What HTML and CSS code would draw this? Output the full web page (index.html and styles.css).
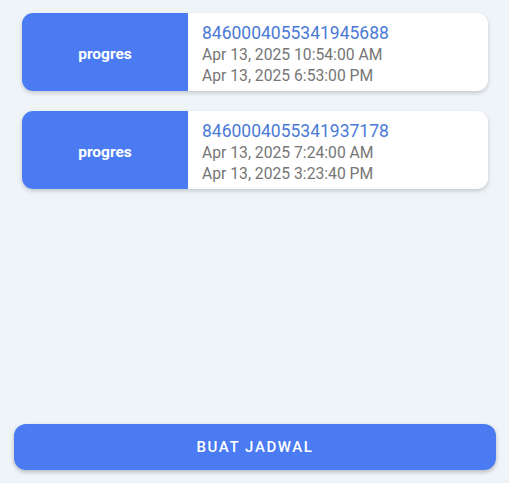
FILE: index.html
```html
<!DOCTYPE html>
<html>
<head>
<meta charset="utf-8">
<link rel="stylesheet" href="styles.css">
</head>
<body>
<div class="page">
  <div class="list">
    <div class="card">
      <div class="status">progres</div>
      <div class="info">
        <div class="id">8460004055341945688</div>
        <div class="date">Apr 13, 2025 10:54:00 AM</div>
        <div class="date">Apr 13, 2025 6:53:00 PM</div>
      </div>
    </div>
    <div class="card">
      <div class="status">progres</div>
      <div class="info">
        <div class="id">8460004055341937178</div>
        <div class="date">Apr 13, 2025 7:24:00 AM</div>
        <div class="date">Apr 13, 2025 3:23:40 PM</div>
      </div>
    </div>
  </div>
  <div class="footer">
    <button class="btn">BUAT JADWAL</button>
  </div>
</div>
</body>
</html>
```
FILE: styles.css
```css
html, body {
  margin: 0;
  padding: 0;
  background: #eff4f9;
  font-family: Roboto, "Noto Sans", sans-serif;
}
.page {
  height: 483px;
  display: flex;
  flex-direction: column;
  justify-content: space-between;
}
.list {
  display: flex;
  flex-direction: column;
  gap: 20px;
  padding: 13px 21px 0 22px;
}
.card {
  display: flex;
  height: 78px;
  background: #fff;
  border-radius: 11px;
  overflow: hidden;
  box-shadow: 0 2px 4px rgba(0, 0, 0, 0.18);
}
.status {
  width: 166px;
  flex: none;
  background: #4a7bf2;
  color: #fff;
  font-weight: 700;
  font-size: 15.5px;
  display: flex;
  align-items: center;
  justify-content: center;
  padding-top: 3px;
  box-sizing: border-box;
}
.info {
  padding: 9px 14px 0 14px;
  display: flex;
  flex-direction: column;
}
.id {
  color: #4b7ad6;
  font-size: 17.5px;
  line-height: 22px;
}
.date {
  color: #767676;
  font-size: 15.7px;
  line-height: 21px;
}
.footer {
  padding: 0 13px 13px 14px;
}
.btn {
  width: 100%;
  height: 46px;
  border: none;
  border-radius: 12px;
  background: #4a7bf2;
  color: #fff;
  font-family: Roboto, "Noto Sans", sans-serif;
  font-weight: 500;
  font-size: 15px;
  letter-spacing: 1.6px;
  box-shadow: 0 2px 4px rgba(0, 0, 0, 0.25);
}
```
